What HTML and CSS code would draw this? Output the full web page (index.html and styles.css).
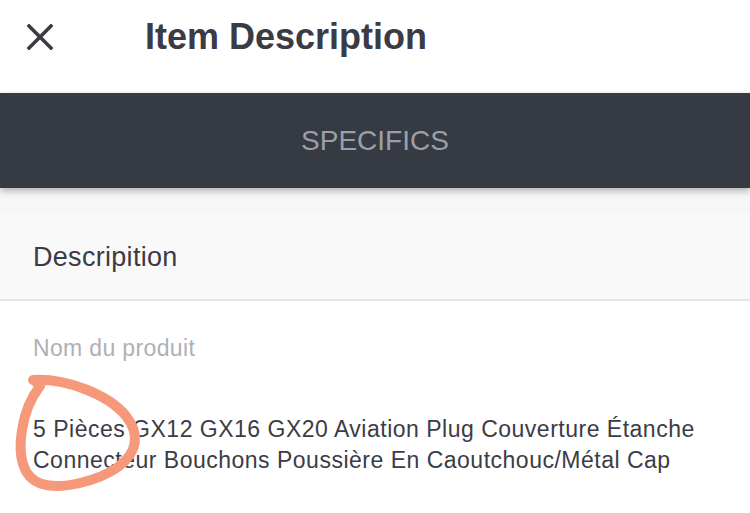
FILE: index.html
```html
<!DOCTYPE html>
<html lang="fr">
<head>
<meta charset="utf-8">
<title>Item Description</title>
<link rel="stylesheet" href="styles.css">
</head>
<body>
<header class="topbar">
  <svg class="close" width="26" height="26" viewBox="0 0 26 26"><path d="M2 2 L24 24 M24 2 L2 24" stroke="#3a3b45" stroke-width="3.6" stroke-linecap="square" fill="none"/></svg>
  <h1 class="title">Item Description</h1>
</header>
<nav class="tabbar"><span class="tab">SPECIFICS</span></nav>
<div class="spacer"></div>
<div class="section-head">Descripition</div>
<main class="content">
  <div class="label">Nom du produit</div>
  <p class="value">5 Pièces GX12 GX16 GX20 Aviation Plug Couverture Étanche Connecteur Bouchons Poussière En Caoutchouc/Métal Cap</p>
</main>
<svg class="annot" width="750" height="513" viewBox="0 0 750 513"><path d="M33,380 C65,378 108,394 126,416 C140,434 138,452 118,467 C98,481 62,490 42,484 C22,478 18,455 22,430 C25,410 33,395 40,386 L34,380" fill="none" stroke="#f6997b" stroke-width="10" stroke-linecap="round" stroke-linejoin="round"/></svg>
</body>
</html>
```
FILE: styles.css
```css
html, body {
  margin: 0;
  padding: 0;
  background: #ffffff;
}
body {
  position: relative;
  width: 750px;
  height: 513px;
  overflow: hidden;
  font-family: "Liberation Sans", Arial, sans-serif;
  color: #3b3c46;
}
.topbar {
  height: 93px;
  box-sizing: border-box;
  padding-top: 17px;
  display: flex;
  align-items: flex-start;
  background: #fff;
}
.close {
  display: block;
  margin: 7px 0 0 27px;
  flex: none;
}
.title {
  margin: 0 0 0 92px;
  font-size: 36px;
  line-height: 40px;
  font-weight: 700;
  color: #3a3b45;
}
.tabbar {
  position: relative;
  z-index: 2;
  height: 95px;
  background: #353a43;
  display: flex;
  align-items: center;
  justify-content: center;
  box-shadow: 0 3px 7px rgba(0, 0, 0, 0.28);
}
.tab {
  font-size: 28px;
  color: #9c9fa6;
  line-height: 32px;
}
.spacer {
  height: 25px;
  background: #f6f6f6;
}
.section-head {
  height: 88px;
  box-sizing: border-box;
  background: #f9f9fa;
  border-bottom: 2px solid #e4e4e6;
  display: flex;
  align-items: center;
  padding: 2px 0 0 33px;
  font-size: 27px;
  letter-spacing: 0.3px;
  color: #3a3b45;
}
.content {
  padding: 32px 30px 0 33px;
}
.label {
  font-size: 23px;
  line-height: 30px;
  letter-spacing: 0.35px;
  color: #b0b0b4;
}
.value {
  margin: 51px 0 0 0;
  font-size: 23px;
  line-height: 31px;
  letter-spacing: 0.5px;
  color: #3b3c46;
}
.annot {
  position: absolute;
  left: 0;
  top: 0;
  pointer-events: none;
}
```
